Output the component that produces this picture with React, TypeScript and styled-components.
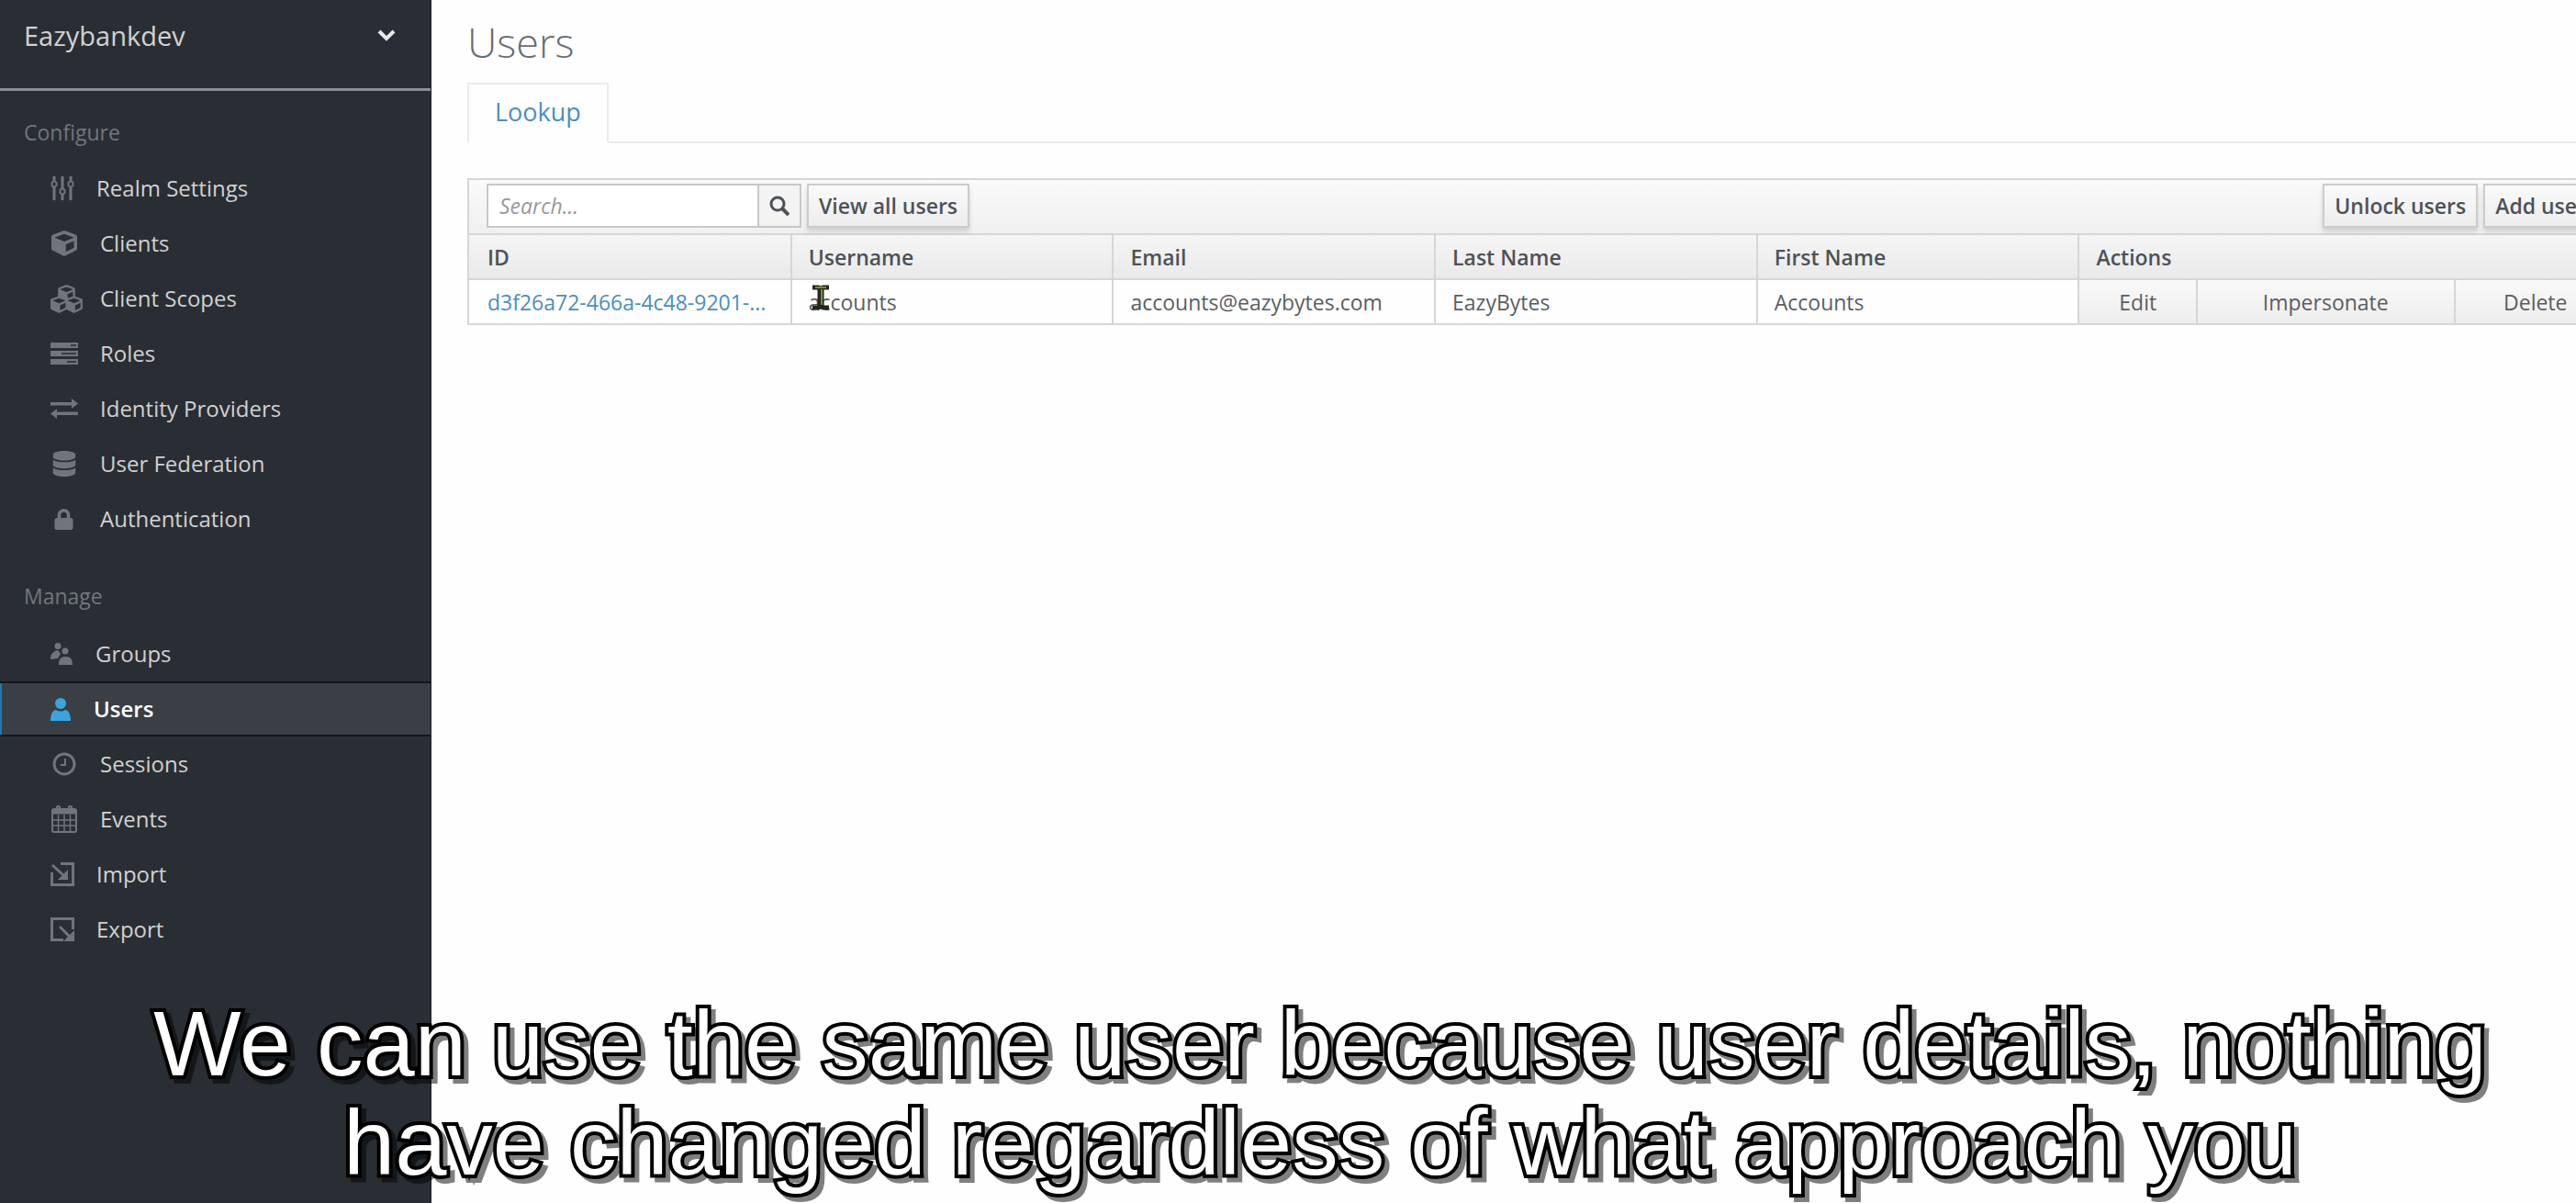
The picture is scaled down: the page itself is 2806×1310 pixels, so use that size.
import React from 'react';
import styled, { createGlobalStyle, css } from 'styled-components';
import { FaCube, FaCubes, FaDatabase, FaLock } from 'react-icons/fa';

const sans = '"Open Sans", "Noto Sans", sans-serif';
const ink = '#4d5258';
const cellInk = '#5a5e63';
const link = '#4a8fc0';
const line = '#d6d6d6';

const GlobalStyle = createGlobalStyle`
  * { box-sizing: border-box; }
  html, body, #root { height: 100%; }
  body { margin: 0; background: #fefefe; font-family: ${sans}; overflow: hidden; }
  button, input, select { font-family: inherit; }
`;

const Shell = styled.div`
  display: flex;
  min-height: 100vh;
  position: relative;
  overflow: hidden;
`;

const Sidebar = styled.nav`
  flex: 0 0 470px;
  background: #292e34;
  border-right: 1px solid #1b2024;
`;

const RealmBar = styled.div`
  height: 99px;
  padding: 20px 38px 0 26px;
  display: flex;
  align-items: flex-start;
  justify-content: space-between;
  border-bottom: 3px solid #8b8f94;
`;

const RealmButton = styled.button`
  flex: 1;
  display: flex;
  align-items: center;
  justify-content: space-between;
  padding: 0;
  border: 0;
  background: none;
  color: #d1d1d1;
  font-size: 29px;
  line-height: 38px;
`;

const SectionTitle = styled.h2<{ $first?: boolean }>`
  margin: ${(p) => (p.$first ? '28px 0 14px' : '37px 0 16px')};
  padding-left: 26px;
  color: #72767b;
  font-size: 23px;
  line-height: 34px;
  font-weight: 400;
`;

const NavList = styled.ul`
  margin: 0;
  padding: 0;
  list-style: none;
`;

const NavLink = styled.a<{ $active?: boolean }>`
  display: flex;
  align-items: center;
  gap: 25px;
  height: 60px;
  padding-left: 55px;
  color: #d1d1d1;
  font-size: 24px;
  line-height: 34px;
  font-weight: 500;
  text-decoration: none;
  ${(p) =>
    p.$active &&
    css`
      background: #393f44;
      color: #fff;
      font-weight: 600;
      border-top: 2px solid #131619;
      border-bottom: 2px solid #131619;
      box-shadow: inset 2px 0 0 #1f78b0;
    `}
`;

const IconBox = styled.span<{ $width: number; $active?: boolean; $wide?: boolean }>`
  flex: none;
  width: ${(p) => p.$width}px;
  display: flex;
  justify-content: ${(p) => (p.$wide ? 'flex-start' : 'center')};
  color: ${(p) => (p.$active ? '#39a5dc' : '#70757c')};
  svg { flex: none; display: block; }
`;

const Main = styled.main`
  flex: 1;
  min-width: 0;
  padding-left: 39px;
`;

const Sheet = styled.div`
  margin-right: -44px;
`;

const Title = styled.h1`
  margin: 0;
  padding: 16px 0 14px;
  color: #6b6e72;
  font-size: 45px;
  line-height: 60px;
  font-weight: 300;
`;

const Tabs = styled.div`
  display: flex;
  border-bottom: 2px solid #ececec;
`;

const Tab = styled.a`
  margin-bottom: -2px;
  padding: 12px 28px 14px;
  border: 2px solid #ececec;
  border-bottom-color: #fefefe;
  background: #fefefe;
  color: ${link};
  font-size: 27px;
  line-height: 36px;
  text-decoration: none;
`;

const Panel = styled.section`
  margin-top: 38px;
  border: 2px solid ${line};
  border-right: 0;
`;

const Toolbar = styled.div`
  display: flex;
  align-items: flex-start;
  gap: 6px;
  height: 58px;
  padding: 4px 0 0 19px;
  background: linear-gradient(#fafafa, #f0f0f0);
`;

const SearchForm = styled.form`
  display: flex;
`;

const SearchInput = styled.input`
  width: 297px;
  height: 48px;
  padding: 0 12px;
  border: 2px solid #c8c8c8;
  background: #fff;
  color: ${ink};
  font-size: 23px;
  &::placeholder { color: #999; font-style: italic; opacity: 1; }
`;

const SearchButton = styled.button`
  width: 46px;
  height: 48px;
  display: grid;
  place-items: center;
  padding: 0;
  border: 2px solid #c8c8c8;
  border-left: 0;
  background: #f3f3f3;
  color: ${ink};
`;

const Button = styled.button`
  height: 48px;
  padding: 0 11px;
  border: 2px solid #cccccc;
  background: linear-gradient(#fafafa, #ededed);
  box-shadow: 0 4px 5px rgba(3, 3, 3, 0.14);
  color: ${ink};
  font-size: 23px;
  line-height: 34px;
  font-weight: 600;
  white-space: nowrap;
`;

const ToolbarEnd = styled.div`
  display: flex;
  gap: 6px;
  margin-left: auto;
  padding-right: 20px;
`;

const Table = styled.table`
  width: 100%;
  table-layout: fixed;
  border-collapse: collapse;
  color: ${cellInk};
  font-size: 23px;
  line-height: 34px;
`;

const Col = styled.col<{ $share: number }>`
  width: ${(p) => p.$share}%;
`;

const HeadCell = styled.th`
  height: 49px;
  padding: 0 18px;
  border: 2px solid ${line};
  background: linear-gradient(#f5f5f5, #eaeaea);
  color: ${ink};
  text-align: left;
  font-weight: 600;
  &:first-child { border-left: 0; padding-left: 20px; }
`;

const Cell = styled.td`
  height: 48px;
  padding: 0 18px;
  border-left: 2px solid ${line};
  white-space: nowrap;
  &:first-child { border-left: 0; padding-left: 20px; }
  a { color: ${link}; text-decoration: none; }
`;

const ActionCell = styled.td`
  height: 48px;
  padding: 0;
  border-left: 2px solid ${line};
  background: linear-gradient(#fafafa, #ededed);
`;

const ActionButton = styled.button`
  width: 100%;
  height: 46px;
  padding: 0;
  border: 0;
  background: none;
  color: ${cellInk};
  font-size: 23px;
  line-height: 34px;
`;

const Pointer = styled.svg`
  position: absolute;
  left: 884px;
  top: 308px;
`;

const Caption = styled.p`
  position: absolute;
  left: 0;
  right: 0;
  bottom: 12px;
  margin: 0;
  padding-left: 70px;
  color: #fff;
  font-family: "Liberation Sans", Arial, sans-serif;
  font-size: 101px;
  line-height: 108px;
  text-align: center;
  white-space: nowrap;
  -webkit-text-stroke: 8px #000;
  paint-order: stroke fill;
  filter: drop-shadow(5px 5px 0 rgba(0, 0, 0, 0.5));
`;

const Sliders = () => (
  <svg width="26" height="26" viewBox="0 0 26 26" fill="none" stroke="currentColor" strokeWidth="2">
    <path d="M4 0v5M4 12v14M13 0v13M13 20v6M22 0v5M22 12v14" strokeWidth="3" />
    <path d="M4 5l2.500 2v3L4 12 1.500 10V7zM13 13l2.500 2v3L13 20l-2.500-2v-3zM22 5l2.500 2v3L22 12l-2.500-2V7z" />
  </svg>
);

const Bars = () => (
  <svg width="30" height="24" viewBox="0 0 30 24" fill="currentColor">
    <path d="M0 0h30v6H0zM0 9h30v6H0zM0 18h30v6H0z" />
    <path d="M22 2h6v2h-6zM12 11h16v2H12zM18 20h10v2H18z" fill="#292e34" opacity=".8" />
  </svg>
);

const Exchange = () => (
  <svg width="30" height="22" viewBox="0 0 30 22" fill="currentColor">
    <path d="M0 4h23V0l7 5.500-7 5.500V7.500H0zM30 14.500H7V11l-7 5.500L7 22v-4h23z" />
  </svg>
);

const Groups = () => (
  <svg width="24" height="24" viewBox="0 0 24 24" fill="currentColor">
    <circle cx="8" cy="3.500" r="3.500" />
    <circle cx="16" cy="9" r="3.500" />
    <path d="M0 18c0-6 3-9 8-10l3 4-3 5zM9 24c0-6 2-9 7.500-9S24 18 24 24z" />
  </svg>
);

const Person = () => (
  <svg width="22" height="25" viewBox="0 0 22 25" fill="currentColor">
    <circle cx="11" cy="6" r="6" />
    <path d="M0 25c0-8 3-12 6-12 3 2 7 2 10 0 3 0 6 4 6 12z" />
  </svg>
);

const Clock = () => (
  <svg width="26" height="26" viewBox="0 0 26 26" fill="none" stroke="currentColor" strokeWidth="3">
    <circle cx="13" cy="13" r="11" />
    <path d="M14 7v7H9" strokeWidth="2" />
  </svg>
);

const Calendar = () => (
  <svg width="28" height="30" viewBox="0 0 28 30" fill="none" stroke="currentColor" strokeWidth="2">
    <rect x="1" y="4" width="26" height="25" rx="2" />
    <path d="M2 7h24" strokeWidth="5" />
    <path d="M7.500 10v18M14 10v18M20.500 10v18M2 16h24M2 22h24" strokeWidth="1.500" />
    <rect x="6" y="1" width="3" height="6" rx="1" />
    <rect x="19" y="1" width="3" height="6" rx="1" />
  </svg>
);

const ImportIcon = () => (
  <svg width="26" height="26" viewBox="0 0 26 26" fill="none" stroke="currentColor" strokeWidth="3">
    <path d="M11 1.500h13.500v23h-23V11" />
    <path d="M2 3l13 12" />
    <path d="M19 8v11H8z" fill="currentColor" stroke="none" />
  </svg>
);

const ExportIcon = () => (
  <svg width="26" height="26" viewBox="0 0 26 26" fill="none" stroke="currentColor" strokeWidth="3">
    <path d="M14 24.500H1.500v-23h23V13" />
    <path d="M10 10l12 12" />
    <path d="M26 14v12H14z" fill="currentColor" stroke="none" />
  </svg>
);

type Item = { label: string; width: number; icon: React.ReactNode; active?: boolean; wide?: boolean };

const configure: Item[] = [
  { label: 'Realm Settings', width: 25, icon: <Sliders /> },
  { label: 'Clients', width: 29, icon: <FaCube size={28} /> },
  { label: 'Client Scopes', width: 29, icon: <FaCubes size={35} />, wide: true },
  { label: 'Roles', width: 29, icon: <Bars /> },
  { label: 'Identity Providers', width: 29, icon: <Exchange /> },
  { label: 'User Federation', width: 29, icon: <FaDatabase size={28} /> },
  { label: 'Authentication', width: 29, icon: <FaLock size={23} /> },
];

const manage: Item[] = [
  { label: 'Groups', width: 24, icon: <Groups /> },
  { label: 'Users', width: 22, icon: <Person />, active: true },
  { label: 'Sessions', width: 29, icon: <Clock /> },
  { label: 'Events', width: 29, icon: <Calendar /> },
  { label: 'Import', width: 25, icon: <ImportIcon /> },
  { label: 'Export', width: 25, icon: <ExportIcon /> },
];

const Menu = ({ items }: { items: Item[] }) => (
  <NavList>
    {items.map((item) => (
      <li key={item.label}>
        <NavLink href="#" $active={item.active}>
          <IconBox $width={item.width} $active={item.active} $wide={item.wide}>{item.icon}</IconBox>
          {item.label}
        </NavLink>
      </li>
    ))}
  </NavList>
);

const columns = ['ID', 'Username', 'Email', 'Last Name', 'First Name'];
const shares = [15, 15, 15, 15, 15, 5.5, 12, 7.5];

export default function App() {
  return (
    <>
      <GlobalStyle />
      <Shell>
        <Sidebar>
          <RealmBar>
            <RealmButton type="button">
              Eazybankdev
              <svg width="20" height="14" viewBox="0 0 20 14" fill="none" stroke="#e8e8e8" strokeWidth="4">
                <path d="M2 2l8 8 8-8" />
              </svg>
            </RealmButton>
          </RealmBar>
          <SectionTitle $first>Configure</SectionTitle>
          <Menu items={configure} />
          <SectionTitle>Manage</SectionTitle>
          <Menu items={manage} />
        </Sidebar>
        <Main>
          <Sheet>
            <Title>Users</Title>
            <Tabs>
              <Tab href="#">Lookup</Tab>
            </Tabs>
            <Panel>
              <Toolbar>
                <SearchForm>
                  <SearchInput type="text" placeholder="Search..." aria-label="Search" />
                  <SearchButton type="button" aria-label="Search users">
                    <svg width="22" height="22" viewBox="0 0 22 22" fill="none" stroke="currentColor" strokeWidth="3">
                      <circle cx="9" cy="9" r="7" />
                      <path d="M14 14l7 7" strokeWidth="4" />
                    </svg>
                  </SearchButton>
                </SearchForm>
                <Button type="button">View all users</Button>
                <ToolbarEnd>
                  <Button type="button">Unlock users</Button>
                  <Button type="button">Add user</Button>
                </ToolbarEnd>
              </Toolbar>
              <Table>
                <colgroup>
                  {shares.map((share, i) => <Col key={i} $share={share} />)}
                </colgroup>
                <thead>
                  <tr>
                    {columns.map((c) => <HeadCell key={c}>{c}</HeadCell>)}
                    <HeadCell colSpan={3}>Actions</HeadCell>
                  </tr>
                </thead>
                <tbody>
                  <tr>
                    <Cell><a href="#">d3f26a72-466a-4c48-9201-...</a></Cell>
                    <Cell>accounts</Cell>
                    <Cell>accounts@eazybytes.com</Cell>
                    <Cell>EazyBytes</Cell>
                    <Cell>Accounts</Cell>
                    <ActionCell><ActionButton type="button">Edit</ActionButton></ActionCell>
                    <ActionCell><ActionButton type="button">Impersonate</ActionButton></ActionCell>
                    <ActionCell><ActionButton type="button">Delete</ActionButton></ActionCell>
                  </tr>
                </tbody>
              </Table>
            </Panel>
          </Sheet>
        </Main>
        <Pointer width="20" height="32" viewBox="0 0 20 32" fill="none">
          <path d="M1 5h6l3 1 3-1h6M1 27h6l3-1 3 1h6" stroke="#23281c" strokeWidth="5" />
          <path d="M10 5v22" stroke="#23281c" strokeWidth="7" />
          <path d="M4 5h12M11 7v17" stroke="#7c8a35" strokeWidth="2" />
        </Pointer>
        <Caption>
          We can use the same user because user details, nothing
          <br />
          have changed regardless of what approach you
        </Caption>
      </Shell>
    </>
  );
}
